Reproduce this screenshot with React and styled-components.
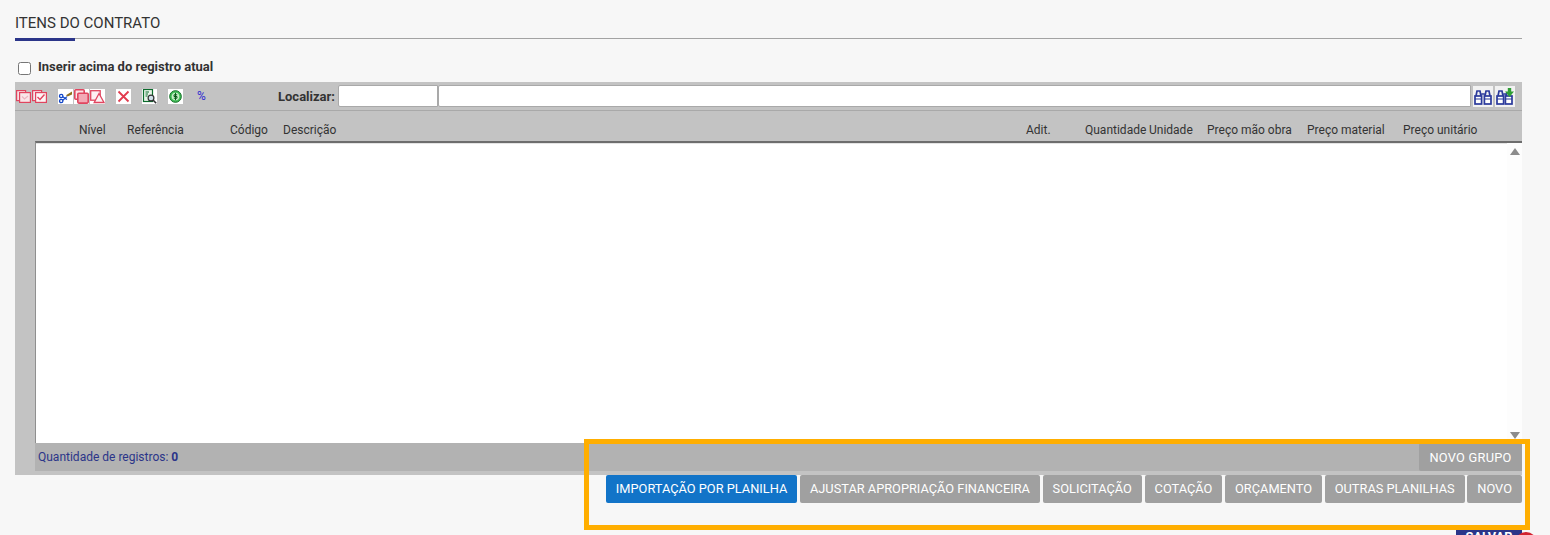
import React from "react";
import styled, { createGlobalStyle } from "styled-components";

const GlobalStyle = createGlobalStyle`
  html, body {
    margin: 0;
    padding: 0;
    height: 535px;
    overflow: hidden;
    background: #f7f7f7;
    font-family: Roboto, "Liberation Sans", sans-serif;
  }
`;

const columns = [
  { label: "Nível", width: 48 },
  { label: "Referência", width: 103 },
  { label: "Código", width: 53 },
  { label: "Descrição", grow: true },
  { label: "Adit.", width: 59 },
  { label: "Quantidade", width: 64 },
  { label: "Unidade", width: 58 },
  { label: "Preço mão obra", width: 100 },
  { label: "Preço material", width: 96 },
  { label: "Preço unitário", width: 119 },
];

const actions = [
  "AJUSTAR APROPRIAÇÃO FINANCEIRA",
  "SOLICITAÇÃO",
  "COTAÇÃO",
  "ORÇAMENTO",
  "OUTRAS PLANILHAS",
  "NOVO",
];

const RED = "#e0455f";

const FolderA = () => (
  <svg width="15" height="15" viewBox="0 0 15 15" fill="none" stroke={RED} strokeWidth="1.2">
    <rect x="0.6" y="1.6" width="9" height="10" fill="#f7dfe3" />
    <rect x="3.6" y="3.6" width="10.8" height="9.8" fill="#f9e6e9" />
    <path d="M6 7.5l2.5 2.5 3.5-3" stroke="#eeb4bf" />
  </svg>
);

const FolderB = () => (
  <svg width="15" height="15" viewBox="0 0 15 15" fill="none" stroke={RED} strokeWidth="1.2">
    <rect x="0.6" y="1.6" width="9" height="10" fill="#f7e8ea" />
    <rect x="3.6" y="3.6" width="10.8" height="9.8" fill="#fdf5f6" />
    <path d="M5.5 8l2.5 2.5 4.5-5" strokeWidth="1.4" />
  </svg>
);

const Scissors = () => (
  <svg width="15" height="15" viewBox="0 0 15 15" fill="none">
    <circle cx="3.2" cy="7" r="1.7" stroke="#1347c9" strokeWidth="1.3" />
    <circle cx="3.2" cy="12" r="1.7" stroke="#1347c9" strokeWidth="1.3" />
    <path d="M4.8 7.8l4.2 2.8M4.8 11.2L9 7.6" stroke="#1347c9" strokeWidth="1.2" />
    <path d="M8 6.2L14 2.5v3L9.5 7.4z" fill="#8f6f1d" />
  </svg>
);

const CopyIcon = () => (
  <svg width="15" height="15" viewBox="0 0 15 15" fill="none" stroke={RED} strokeWidth="1.6">
    <rect x="0.8" y="0.8" width="9.4" height="9.4" rx="1" fill="#fbe5e8" />
    <rect x="3.8" y="4.3" width="10.4" height="9.8" rx="1" fill="#f3a9b6" />
  </svg>
);

const PasteIcon = () => (
  <svg width="15" height="15" viewBox="0 0 15 15" fill="none" stroke={RED} strokeWidth="1.3">
    <rect x="0.7" y="1.7" width="9.5" height="9.5" fill="#fdf0f2" />
    <path d="M9 4.5l5 9H4.2z" fill="#fdf0f2" />
  </svg>
);

const CloseIcon = () => (
  <svg width="15" height="15" viewBox="0 0 15 15" fill="none" stroke="#e23b4e" strokeWidth="1.8">
    <path d="M2.5 2.5l10 10M12.5 2.5l-10 10" />
  </svg>
);

const DocSearch = () => (
  <svg width="15" height="15" viewBox="0 0 15 15" fill="none">
    <rect x="1.5" y="0.5" width="9" height="12" stroke="#0b6b2c" strokeWidth="1.2" fill="#e8f5e8" />
    <path d="M3.5 3h3.5M3.5 5h2.5M3.5 7h2" stroke="#0b6b2c" strokeWidth="1.2" />
    <circle cx="9" cy="9" r="2.9" stroke="#333" strokeWidth="1.2" fill="#cfe0ea" />
    <path d="M11 11l3.2 3.2" stroke="#333" strokeWidth="1.6" />
  </svg>
);

const MoneyIcon = () => (
  <svg width="15" height="15" viewBox="0 0 15 15" fill="none">
    <circle cx="7.5" cy="7.5" r="5.8" fill="#45c05a" stroke="#0b6b1f" />
    <circle cx="7.5" cy="7.5" r="3.8" fill="#c9f0c9" />
    <path d="M7.5 3.8v7.4M9.2 5.8H6v1.7h3v1.7H5.8" stroke="#0b5c1a" />
  </svg>
);

const Percent = styled.span`
  color: #2d2dd0;
  font-size: 12px;
  line-height: 14px;
  display: block;
  text-align: center;
`;

const Binoculars = ({ plus }) => (
  <svg width="18" height="17" viewBox="0 0 18 17" fill="none" stroke="#2b3a9c" strokeWidth="1.7">
    <rect x="1" y="8" width="6.6" height="8" fill="#fff" />
    <rect x={plus ? 9.4 : 10.4} y="8" width="6.6" height="8" fill="#fff" />
    <path d={plus ? "M2 8l1-5h3l1 5M10 8l1-4M7.5 6h3" : "M2 8l1-5h3l1 5M11 8l1-5h3l1 5M7.5 6h3"} />
    <path d={plus ? "M1 11h6.5M9.5 11H16" : "M1 11h6.5M10.5 11H17"} strokeWidth="1.2" />
    {plus && <path d="M11.8 0h3.4v3.6H18L13.5 9 9 3.6h2.8z" fill="#2f9e35" stroke="none" />}
  </svg>
);

export default function App() {
  return (
    <Page>
      <GlobalStyle />
      <SectionTitle>Itens do contrato</SectionTitle>

      <CheckRow>
        <input type="checkbox" />
        <label>Inserir acima do registro atual</label>
      </CheckRow>

      <Panel>
        <Toolbar>
          <IconGroup>
            <IconBox $plain><FolderA /></IconBox>
            <IconBox $plain><FolderB /></IconBox>
          </IconGroup>
          <IconGroup>
            <IconBox><Scissors /></IconBox>
            <IconBox><CopyIcon /></IconBox>
            <IconBox><PasteIcon /></IconBox>
          </IconGroup>
          <IconGroup>
            <IconBox><CloseIcon /></IconBox>
          </IconGroup>
          <IconGroup>
            <IconBox><DocSearch /></IconBox>
          </IconGroup>
          <IconGroup>
            <IconBox><MoneyIcon /></IconBox>
          </IconGroup>
          <IconGroup>
            <IconBox $plain><Percent>%</Percent></IconBox>
          </IconGroup>
          <FindLabel>Localizar:</FindLabel>
          <FindInput $width="100px" />
          <FindInput $grow />
          <FindButton><Binoculars /></FindButton>
          <FindButton><Binoculars plus /></FindButton>
        </Toolbar>

        <HeaderRow>
          {columns.map((c) => (
            <HeaderCell key={c.label} $width={c.width} $grow={c.grow}>
              {c.label}
            </HeaderCell>
          ))}
        </HeaderRow>

        <GridBody>
          <Scrollbar>
            <ArrowUp />
            <ArrowDown />
          </Scrollbar>
        </GridBody>

        <FooterBar>
          <Count>
            Quantidade de registros: <b>0</b>
          </Count>
          <GroupButton>NOVO GRUPO</GroupButton>
        </FooterBar>
      </Panel>

      <Actions>
        <ActionButton $primary>IMPORTAÇÃO POR PLANILHA</ActionButton>
        {actions.map((a) => (
          <ActionButton key={a}>{a}</ActionButton>
        ))}
      </Actions>

      <SaveRow>
        <SaveButton>SALVAR</SaveButton>
        <Badge />
      </SaveRow>

      <Highlight />
    </Page>
  );
}

const Page = styled.div`
  position: relative;
  width: 1550px;
  height: 535px;
  overflow: hidden;
  box-sizing: border-box;
  padding: 15px 28px 0 15px;
`;

const SectionTitle = styled.div`
  position: relative;
  height: 23px;
  border-bottom: 1px solid #a3a3a3;
  font-size: 15px;
  line-height: 17px;
  color: #333;
  text-transform: uppercase;

  &::after {
    content: "";
    position: absolute;
    left: 0;
    top: 23px;
    width: 60px;
    height: 3px;
    background: #2b3589;
  }
`;

const CheckRow = styled.div`
  display: flex;
  align-items: center;
  height: 16px;
  margin: 20px 0 0 3px;
  gap: 7px;

  input {
    margin: 2px 0 0;
    width: 13px;
    height: 13px;
  }

  label {
    margin-bottom: 2px;
    font-size: 13px;
    font-weight: 700;
    color: #333;
  }
`;

const Panel = styled.div`
  margin-top: 7px;
  height: 393px;
  background: #c3c3c3;
  display: flex;
  flex-direction: column;
`;

const Toolbar = styled.div`
  display: flex;
  align-items: center;
  height: 29px;
  flex: none;
  box-sizing: border-box;
  padding: 0 7px 0 1px;
  border-bottom: 1px solid #a9a9a9;
`;

const IconGroup = styled.div`
  display: flex;
  align-items: center;
  gap: 1px;
  margin-right: 11px;
`;

const IconBox = styled.span`
  width: 15px;
  height: 15px;
  display: flex;
  align-items: center;
  justify-content: center;
  background: ${(p) => (p.$plain ? "transparent" : "#fff")};
`;

const FindLabel = styled.span`
  margin-left: 58px;
  margin-right: 3px;
  font-size: 13px;
  font-weight: 700;
  color: #333;
`;

const FindInput = styled.div`
  box-sizing: border-box;
  height: 22px;
  width: ${(p) => p.$width || "auto"};
  flex: ${(p) => (p.$grow ? 1 : "none")};
  background: #fff;
  border: 1px solid #a9a9a9;
  border-radius: 2px 0 0 2px;
`;

const FindButton = styled.span`
  width: 20px;
  height: 21px;
  margin-left: 2px;
  display: flex;
  align-items: center;
  justify-content: center;
  background: #f2f2f2;
`;

const HeaderRow = styled.div`
  display: flex;
  align-items: center;
  height: 30px;
  flex: none;
  box-sizing: border-box;
  padding: 8px 0 0 64px;
`;

const HeaderCell = styled.div`
  flex: ${(p) => (p.$grow ? 1 : "none")};
  width: ${(p) => (p.$width ? `${p.$width}px` : "auto")};
  font-size: 12px;
  color: #333;
  white-space: nowrap;
`;

const GridBody = styled.div`
  height: 302px;
  flex: none;
  margin-left: 20px;
  background: #fff;
  border-left: 1px solid #8f8f8f;
  border-top: 2px solid #6d6d6d;
  box-shadow: inset 0 1px #e4e4e4;
  display: flex;
  justify-content: flex-end;
  box-sizing: border-box;
`;

const Scrollbar = styled.div`
  width: 15px;
  background: #fdfdfd;
  display: flex;
  flex-direction: column;
  justify-content: space-between;
  align-items: center;
  padding: 5px 0 4px;
`;

const ArrowUp = styled.i`
  width: 0;
  height: 0;
  border-left: 5px solid transparent;
  border-right: 5px solid transparent;
  border-bottom: 7px solid #8c8c8c;
`;

const ArrowDown = styled.i`
  width: 0;
  height: 0;
  border-left: 5px solid transparent;
  border-right: 5px solid transparent;
  border-top: 7px solid #8c8c8c;
`;

const FooterBar = styled.div`
  height: 28px;
  flex: none;
  margin-left: 20px;
  background: #b2b2b2;
  display: flex;
  align-items: center;
  justify-content: space-between;
`;

const Count = styled.span`
  margin-left: 3px;
  font-size: 12px;
  color: #2b3589;
`;

const GroupButton = styled.span`
  height: 28px;
  width: 103px;
  display: flex;
  align-items: center;
  justify-content: center;
  background: #a0a0a0;
  border-radius: 2px 0 0 2px;
  color: #fff;
  font-size: 12.8px;
  letter-spacing: 0.25px;
`;

const Actions = styled.div`
  display: flex;
  justify-content: flex-end;
  gap: 2.7px;
`;

const ActionButton = styled.span`
  height: 27px;
  padding: 0 10px 1px;
  display: flex;
  align-items: center;
  border-radius: 2px;
  font-size: 12.8px;
  white-space: nowrap;
  color: #fff;
  background: ${(p) => (p.$primary ? "#1274c8" : "#a0a0a0")};
`;

const SaveRow = styled.div`
  position: absolute;
  top: 530px;
  left: 1456px;
  display: flex;
`;

const SaveButton = styled.span`
  width: 66px;
  height: 28px;
  background: #2b3589;
  color: #fff;
  font-size: 12.8px;
  font-weight: 700;
  text-align: center;
  line-height: 14px;
`;

const Badge = styled.span`
  position: absolute;
  left: 59px;
  top: 2px;
  width: 22px;
  height: 22px;
  border-radius: 50%;
  background: #d3222f;
`;

const Highlight = styled.div`
  position: absolute;
  left: 584px;
  top: 439px;
  width: 946px;
  height: 91px;
  box-sizing: border-box;
  border: 5px solid #ffae00;
  pointer-events: none;
`;
